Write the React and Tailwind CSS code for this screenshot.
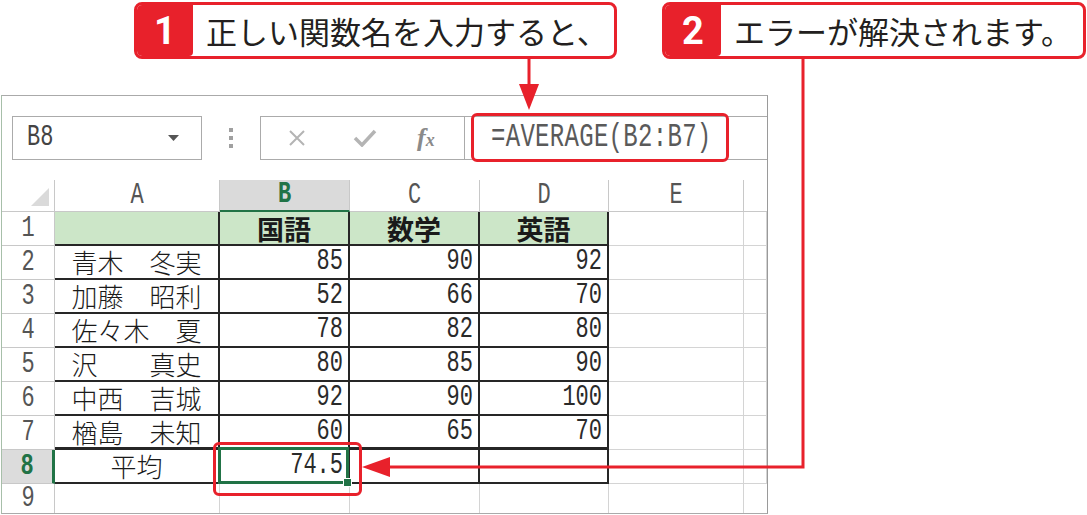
import React from "react";

// Excel-style cell data
const people = [
  ["青木　冬実", "85", "90", "92"],
  ["加藤　昭利", "52", "66", "70"],
  ["佐々木　夏", "78", "82", "80"],
  ["沢　　真史", "80", "85", "90"],
  ["中西　吉城", "92", "90", "100"],
  ["楢島　未知", "60", "65", "70"],
];

const jp = "font-['Noto_Sans_CJK_JP',sans-serif]";
const gridCell = "border-r border-b border-[#d4d4d4]";
const dataCell = "border-r-2 border-b-2 border-[#262626]";
const dataCellThick = "border-r-2 border-b-[3px] border-[#262626]";

function Mono({ children, className = "" }) {
  return (
    <span
      className={`inline-block font-['Liberation_Mono',monospace] text-[22px] leading-none scale-y-[1.35] ${className}`}
    >
      {children}
    </span>
  );
}

function Callout({ num, text, className }) {
  return (
    <div
      className={`absolute top-[2px] h-[57px] flex rounded-[8px] border-[3px] border-[#e8212b] bg-white overflow-hidden ${className}`}
    >
      <div className="w-[56px] bg-[#e8212b] flex items-center justify-center rounded-br-[4px]">
        <span className="font-['Roboto',sans-serif] font-bold text-[38px] leading-none text-white">
          {num}
        </span>
      </div>
      <div className={`pl-[13px] flex items-center text-[31px] leading-none text-[#231f20] ${jp}`}>
        {text}
      </div>
    </div>
  );
}

function ColHead({ label, selected }) {
  if (selected) {
    return (
      <div className="bg-[#dadada] border-r border-r-[#c8c8c8] border-b-2 border-b-[#217346] flex items-center justify-center">
        <Mono className="font-bold text-[#217346]">{label}</Mono>
      </div>
    );
  }
  return (
    <div className="bg-white border-r border-b border-[#c8c8c8] flex items-center justify-center">
      <Mono className="text-[#555]">{label}</Mono>
    </div>
  );
}

function RowHead({ n }) {
  if (n === 8) {
    return (
      <div className="bg-[#dcdcdc] border-b border-b-[#c8c8c8] border-r-[3px] border-r-[#217346] flex items-center justify-center">
        <Mono className="font-bold text-[#217346]">{n}</Mono>
      </div>
    );
  }
  return (
    <div className="bg-white border-r border-b border-[#c8c8c8] flex items-center justify-center">
      <Mono className="text-[#555]">{n}</Mono>
    </div>
  );
}

function NameCell({ row, children }) {
  return (
    <div
      className={`${row === 7 ? dataCellThick : dataCell} flex items-center justify-center text-[26px] font-light leading-none text-[#1a1a1a] ${jp}`}
    >
      {children}
    </div>
  );
}

function NumCell({ row, children }) {
  return (
    <div className={`${row === 7 ? dataCellThick : dataCell} flex items-center justify-end pr-[5px]`}>
      <Mono className="text-[#2a2a2a]">{children}</Mono>
    </div>
  );
}

function TitleCell({ children }) {
  return (
    <div
      className={`${dataCell} bg-[#cce6c8] flex items-center justify-center text-[27px] font-bold leading-none text-[#1a1a1a] ${jp}`}
    >
      {children}
    </div>
  );
}

export default function App() {
  return (
    <div className="relative w-[1087px] h-[515px] bg-white overflow-hidden">
      {/* ================= Excel window ================= */}
      <div className="pt-[95px] pl-[1px]">
        <div className="w-[767px] h-[419px] flex flex-col border-t border-t-[#aaaaaa] border-r border-r-[#9a9a9a] border-l border-l-[#a7bfa9] border-b border-b-[#aaaaaa]">
          {/* formula bar */}
          <div className="h-[84px] pt-[20px] flex items-start">
            <div className="ml-[10px] w-[190px] h-[44px] border border-[#ababab] flex items-center justify-between pl-[14px] pr-[22px]">
              <Mono className="text-[#444] scale-y-[1.15]">B8</Mono>
              <svg width="11" height="6" viewBox="0 0 11 6">
                <polygon points="0,0 11,0 5.5,6" fill="#555" />
              </svg>
            </div>
            <div className="w-[58px] h-[44px] flex flex-col items-center justify-center gap-[4px]">
              <span className="w-[4px] h-[4px] bg-[#a0a0a0]" />
              <span className="w-[4px] h-[4px] bg-[#a0a0a0]" />
              <span className="w-[4px] h-[4px] bg-[#a0a0a0]" />
            </div>
            <div className="w-[205px] h-[44px] border border-[#ababab] flex items-center">
              <svg className="ml-[26px]" width="20" height="16" viewBox="0 0 20 16">
                <path d="M3 1 L17 15 M17 1 L3 15" stroke="#b4b4b4" strokeWidth="2" />
              </svg>
              <svg className="ml-[46px]" width="24" height="18" viewBox="0 0 24 18">
                <path d="M2 9 L9 16 L22 2" stroke="#b4b4b4" strokeWidth="3.5" fill="none" />
              </svg>
              <span className="ml-[40px] font-['Liberation_Serif',serif] italic font-bold text-[26px] leading-none text-[#8a8a8a]">
                f<span className="text-[18px]">x</span>
              </span>
            </div>
            <div className="flex-1 h-[44px] border-t border-b border-[#ababab] flex items-center pl-[26px]">
              <Mono className="text-[24px] tracking-[0.3px] text-[#5a5a5a] scale-y-[1.25]">=AVERAGE(B2:B7)</Mono>
            </div>
          </div>

          {/* cell grid */}
          <div className="flex-1 grid grid-cols-[53px_165px_130px_130px_129px_135px_1fr] grid-rows-[32px_repeat(8,34px)_1fr]">
            {/* column headers */}
            <div className="relative bg-white border-r border-b border-[#c8c8c8]">
              <svg className="absolute inset-0" width="53" height="32">
                <polygon points="47,8 47,26 29,26" fill="#dadada" />
              </svg>
            </div>
            <ColHead label="A" />
            <ColHead label="B" selected />
            <ColHead label="C" />
            <ColHead label="D" />
            <ColHead label="E" />
            <div className="bg-white border-b border-[#c8c8c8]" />

            {/* row 1 */}
            <RowHead n={1} />
            <TitleCell />
            <TitleCell>国語</TitleCell>
            <TitleCell>数学</TitleCell>
            <TitleCell>英語</TitleCell>
            <div className={gridCell} />
            <div className={gridCell} />

            {/* rows 2 - 7 */}
            {people.map((p, i) => {
              const row = i + 2;
              return (
                <React.Fragment key={row}>
                  <RowHead n={row} />
                  <NameCell row={row}>{p[0]}</NameCell>
                  <NumCell row={row}>{p[1]}</NumCell>
                  <NumCell row={row}>{p[2]}</NumCell>
                  <NumCell row={row}>{p[3]}</NumCell>
                  <div className={gridCell} />
                  <div className={gridCell} />
                </React.Fragment>
              );
            })}

            {/* row 8 */}
            <RowHead n={8} />
            <NameCell row={8}>平均</NameCell>
            <div className={`${dataCell} relative flex items-center justify-end pr-[5px]`}>
              <Mono className="text-[#2a2a2a]">74.5</Mono>
              <div className="absolute -left-[2px] -top-[3px] -right-[1px] -bottom-[2px] border-[3px] border-[#217346]">
                <span className="absolute -right-[6px] -bottom-[6px] w-[9px] h-[9px] bg-[#217346] border border-white" />
              </div>
            </div>
            <NumCell row={8} />
            <NumCell row={8} />
            <div className={gridCell} />
            <div className={gridCell} />

            {/* row 9 */}
            <div className="bg-white border-r border-[#c8c8c8] flex items-center justify-center">
              <Mono className="text-[#555]">9</Mono>
            </div>
            <div className="border-r border-[#d4d4d4]" />
            <div className="border-r border-[#d4d4d4]" />
            <div className="border-r border-[#d4d4d4]" />
            <div className="border-r border-[#d4d4d4]" />
            <div className="border-r border-[#d4d4d4]" />
            <div />
          </div>
        </div>
      </div>

      {/* ================= Annotations ================= */}
      <Callout num="1" text="正しい関数名を入力すると、" className="left-[134px] w-[483px]" />
      <Callout num="2" text="エラーが解決されます。" className="left-[662px] w-[424px]" />

      <svg className="absolute inset-0 pointer-events-none" width="1087" height="515">
        <line x1="529" y1="58" x2="529" y2="88" stroke="#e8212b" strokeWidth="3" />
        <polygon points="519,84 539,84 529,110" fill="#e8212b" />
        <polyline points="803,58 803,467 388,467" fill="none" stroke="#e8212b" strokeWidth="3" />
        <polygon points="390,457 390,477 362,467" fill="#e8212b" />
      </svg>

      <div className="absolute left-[471px] top-[113px] w-[258px] h-[49px] border-[3px] border-[#e8212b] rounded-[6px]" />
      <div className="absolute left-[213px] top-[442px] w-[149px] h-[54px] border-[3px] border-[#e8212b] rounded-[6px]" />
    </div>
  );
}
